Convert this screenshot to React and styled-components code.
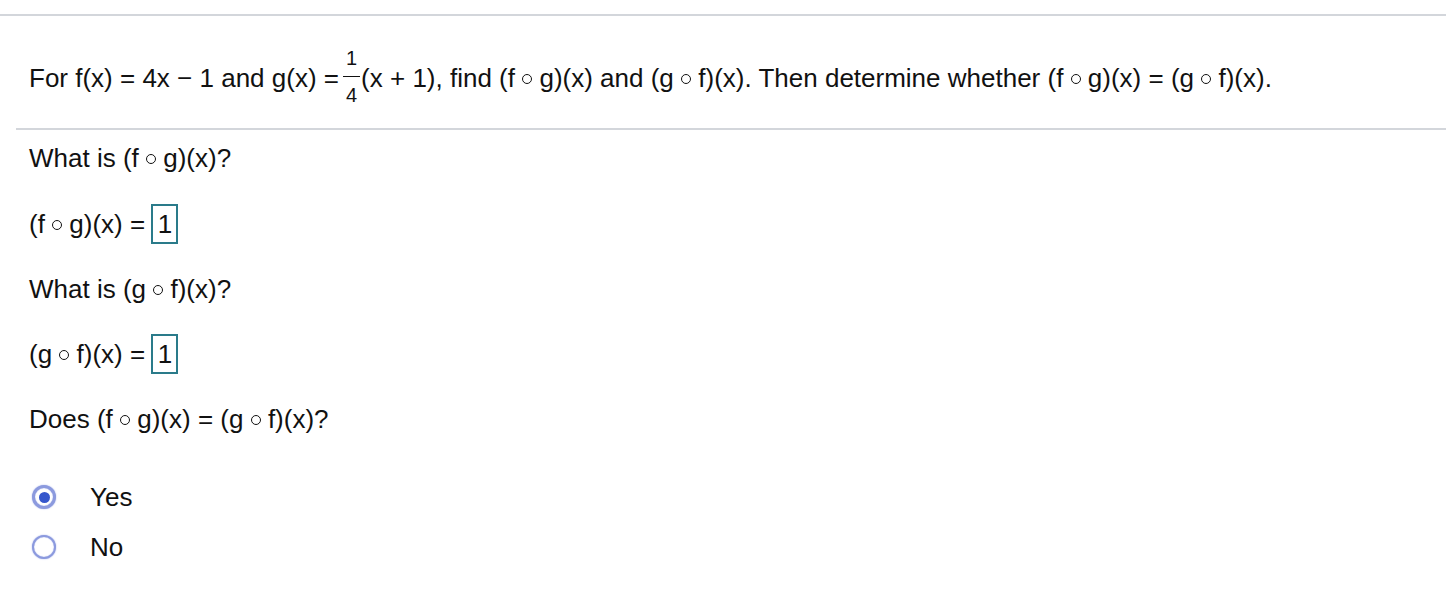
import React from "react";
import styled, { createGlobalStyle } from "styled-components";

const Global = createGlobalStyle`
  html, body { margin: 0; padding: 0; background: #fff; }
  body { font-family: "Liberation Sans", Arial, sans-serif; color: #111; }
`;

const Page = styled.div`
  width: 1446px;
  height: 608px;
  overflow: hidden;
  padding-top: 14px;
  box-sizing: border-box;
  font-size: 26px;
`;

const Rule = styled.div`
  height: 2px;
  background: #d3d6db;
  margin-left: ${(p) => p.$indent || 0}px;
`;

const Prompt = styled.div`
  height: 112px;
  padding: 12px 0 0 29px;
  box-sizing: border-box;
  display: flex;
  align-items: center;
  white-space: pre;
`;

const Frac = styled.span`
  display: inline-flex;
  flex-direction: column;
  align-items: center;
  font-size: 20px;
  line-height: 20px;
  margin: 0 1px 4px 4px;
`;

const Num = styled.span`
  padding: 0 3px 8px;
`;

const Den = styled.span`
  border-top: 1.5px solid #111;
  padding: 8px 3px 0;
`;

const Ring = styled.span`
  display: inline-block;
  width: 10px;
  height: 10px;
  box-sizing: border-box;
  border: 1.7px solid #111;
  border-radius: 50%;
  vertical-align: 0.1em;
`;

const Body = styled.div`
  padding-left: 29px;
`;

const Row = styled.div`
  height: ${(p) => p.$h}px;
  display: flex;
  align-items: center;
  white-space: pre;
`;

const Box = styled.span`
  display: inline-flex;
  align-items: center;
  justify-content: center;
  width: 23px;
  height: 36px;
  border: 2px solid #2a7b8a;
  margin-left: -1px;
`;

const Options = styled.div`
  padding-top: 39px;
  display: flex;
  flex-direction: column;
  gap: 26px;
`;

const Option = styled.label`
  display: flex;
  align-items: center;
  gap: 34px;
  margin-left: 3px;
  height: 24px;
`;

const Radio = styled.span`
  width: 24px;
  height: 24px;
  border-radius: 50%;
  box-sizing: border-box;
  border: ${(p) => (p.$checked ? 3 : 2.5)}px solid #8c9ade;
  box-shadow: 0 0 1.5px #9aa8e6, inset 0 0 1px #9aa8e6;
  background: #fff;
  display: flex;
  align-items: center;
  justify-content: center;
  &::after {
    content: "";
    display: ${(p) => (p.$checked ? "block" : "none")};
    width: 11px;
    height: 11px;
    border-radius: 50%;
    background: #3657cc;
  }
`;

export default function App() {
  return (
    <Page>
      <Global />
      <Rule />
      <Prompt>
        <span>For f(x) = 4x − 1 and g(x) =</span>
        <Frac>
          <Num>1</Num>
          <Den>4</Den>
        </Frac>
        <span>
          (x + 1), find (f <Ring /> g)(x) and (g <Ring /> f)(x). Then determine whether (f <Ring /> g)(x) = (g <Ring /> f)(x).
        </span>
      </Prompt>
      <Rule $indent={16} />
      <Body>
        <Row $h={56}>
          <span>What is (f <Ring /> g)(x)?</span>
        </Row>
        <Row $h={76}>
          <span>(f <Ring /> g)(x) = </span>
          <Box>1</Box>
        </Row>
        <Row $h={54}>
          <span>What is (g <Ring /> f)(x)?</span>
        </Row>
        <Row $h={76}>
          <span>(g <Ring /> f)(x) = </span>
          <Box>1</Box>
        </Row>
        <Row $h={54}>
          <span>Does (f <Ring /> g)(x) = (g <Ring /> f)(x)?</span>
        </Row>
        <Options>
          <Option>
            <Radio $checked />
            <span>Yes</span>
          </Option>
          <Option>
            <Radio />
            <span>No</span>
          </Option>
        </Options>
      </Body>
    </Page>
  );
}
